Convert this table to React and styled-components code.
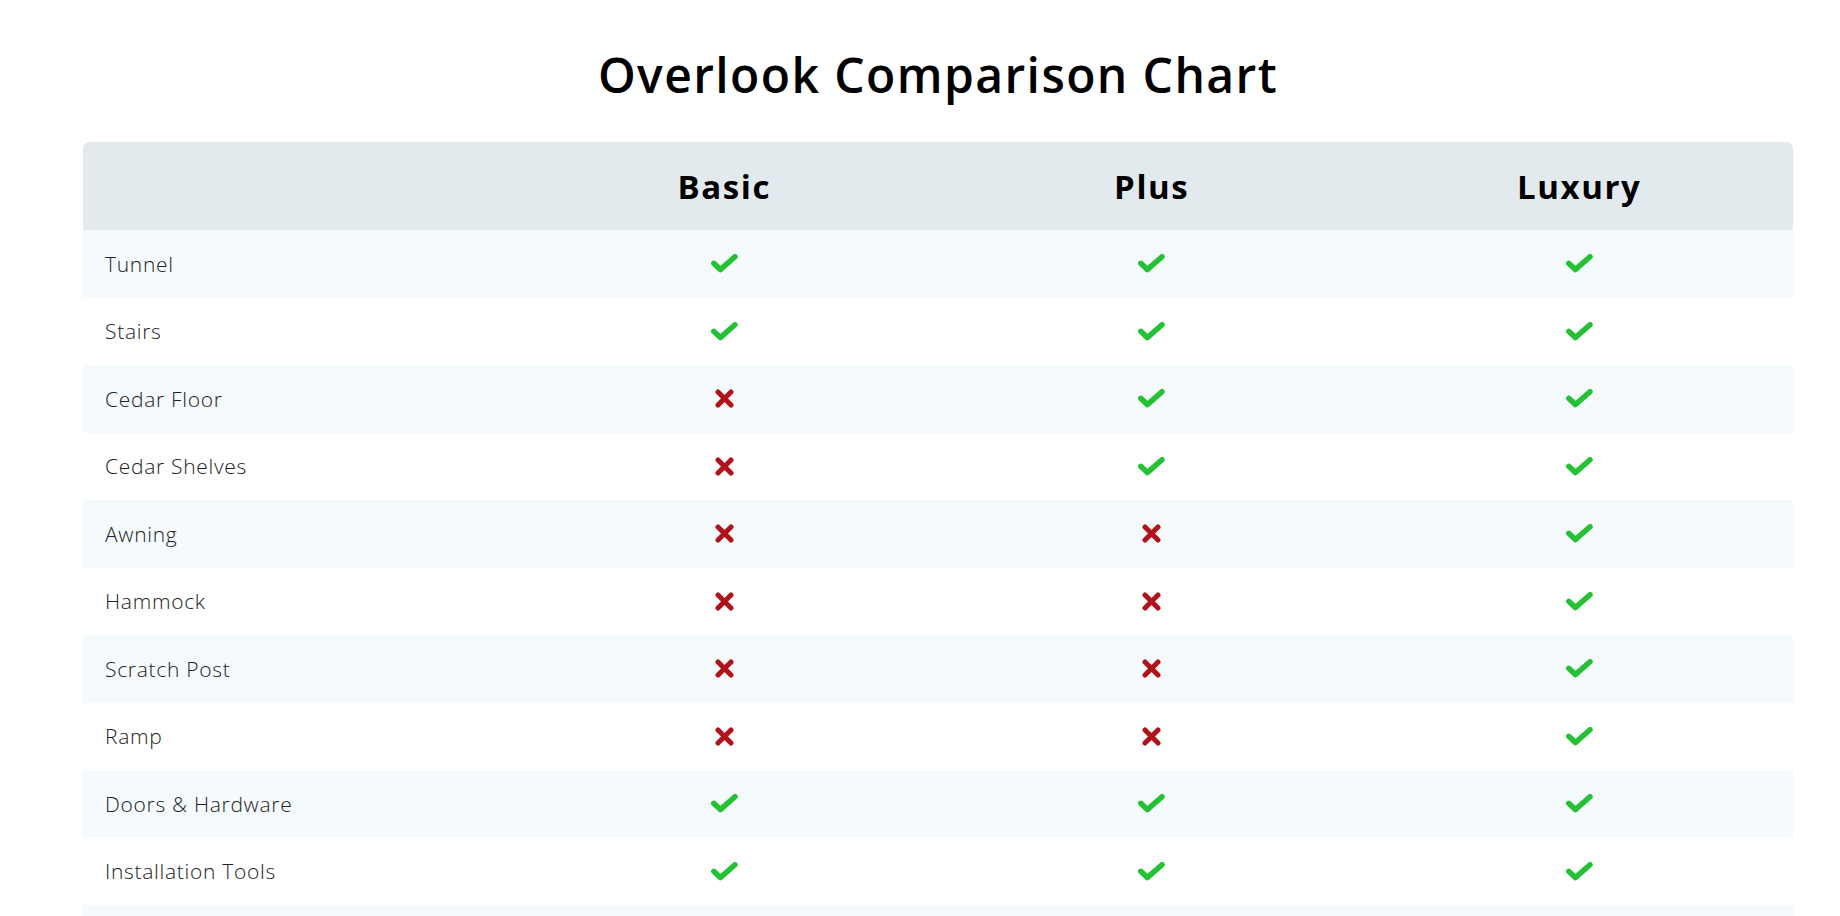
import React from "react";
import styled, { createGlobalStyle } from "styled-components";

const Global = createGlobalStyle`
  html, body { margin: 0; padding: 0; background: #ffffff; }
  body { font-family: "Open Sans", "Noto Sans", sans-serif; }
`;

const Page = styled.main`
  padding: 40px 47px 0 83px;
`;

const Title = styled.h1`
  margin: 0 0 32px;
  height: 70px;
  line-height: 70px;
  text-align: center;
  font-family: "Open Sans", "Noto Sans", sans-serif;
  font-weight: 600;
  font-size: 48px;
  color: #000;
  letter-spacing: 1.4px;
`;

const Table = styled.div`
  display: flex;
  flex-direction: column;
`;

const HeaderRow = styled.div`
  display: grid;
  grid-template-columns: repeat(4, 1fr);
  height: 88px;
  background: #e2eaee;
  border-radius: 6px 6px 0 0;
  align-items: center;
`;

const HeadCell = styled.div`
  text-align: center;
  font-family: "Open Sans", "Noto Sans", sans-serif;
  font-weight: 700;
  font-size: 33px;
  letter-spacing: 1.6px;
  color: #000;
`;

const Row = styled.div`
  display: grid;
  grid-template-columns: repeat(4, 1fr);
  height: 67.5px;
  align-items: center;
  background: ${(p) => (p.$striped ? "#f5fafd" : "#ffffff")};
`;

const Label = styled.div`
  padding-left: 22px;
  font-family: "Open Sans", "Noto Sans", sans-serif;
  font-weight: 300;
  font-size: 21px;
  letter-spacing: 0.7px;
  color: #222;
`;

const Cell = styled.div`
  display: flex;
  justify-content: center;
  align-items: center;
`;

const Check = () => (
  <svg width="27" height="19" viewBox="0 0 27 19" aria-label="yes">
    <polyline
      points="2.75,9.3 9.3,15.6 24,2.75"
      fill="none"
      stroke="#22c232"
      strokeWidth="5.5"
      strokeLinecap="round"
      strokeLinejoin="round"
    />
  </svg>
);

const Cross = () => (
  <svg width="19" height="19" viewBox="0 0 19 19" aria-label="no">
    <path
      d="M3 3 L16 16 M16 3 L3 16"
      fill="none"
      stroke="#b3111a"
      strokeWidth="5"
      strokeLinecap="round"
    />
  </svg>
);

const rows = [
  ["Tunnel", 1, 1, 1],
  ["Stairs", 1, 1, 1],
  ["Cedar Floor", 0, 1, 1],
  ["Cedar Shelves", 0, 1, 1],
  ["Awning", 0, 0, 1],
  ["Hammock", 0, 0, 1],
  ["Scratch Post", 0, 0, 1],
  ["Ramp", 0, 0, 1],
  ["Doors & Hardware", 1, 1, 1],
  ["Installation Tools", 1, 1, 1],
];

export default function App() {
  return (
    <>
      <Global />
      <Page>
        <Title>Overlook Comparison Chart</Title>
        <Table>
          <HeaderRow>
            <HeadCell />
            <HeadCell>Basic</HeadCell>
            <HeadCell>Plus</HeadCell>
            <HeadCell>Luxury</HeadCell>
          </HeaderRow>
          {rows.map(([name, ...vals], i) => (
            <Row key={name} $striped={i % 2 === 0}>
              <Label>{name}</Label>
              {vals.map((v, j) => (
                <Cell key={j}>{v ? <Check /> : <Cross />}</Cell>
              ))}
            </Row>
          ))}
          <Row $striped />
        </Table>
      </Page>
    </>
  );
}
